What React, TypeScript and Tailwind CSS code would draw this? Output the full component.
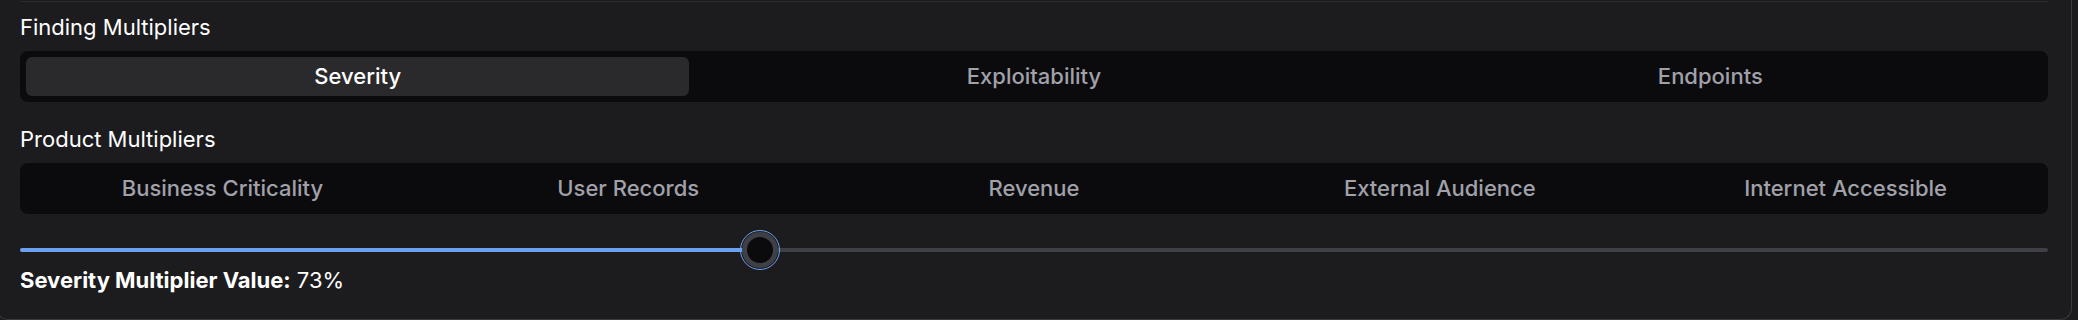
import React, { useState } from "react";

const FINDING = ["Severity", "Exploitability", "Endpoints"];
const PRODUCT = [
  "Business Criticality",
  "User Records",
  "Revenue",
  "External Audience",
  "Internet Accessible",
];

// slider runs 0..200 %, so 73 sits a bit over a third of the way
const MAX = 200;

export default function App() {
  const [active, setActive] = useState(0);
  const [value] = useState(73);
  const pct = (value / MAX) * 100;

  return (
    <div className="min-h-[320px] bg-[#1c1c1f] font-['Inter','Noto_Sans',sans-serif] text-white overflow-hidden">
      <div className="-ml-1 w-[2076px] h-[320px] border border-t-0 border-[#3a3a40] rounded-b-xl pl-[23px] pr-[23px] pt-px">
        <div className="h-px bg-[#2b2b2f]" />

        <div className="mt-[9px] text-[22px] leading-[32px]">Finding Multipliers</div>
        <div className="mt-2 grid grid-cols-3 gap-[13px] rounded-lg bg-[#0b0b0d] p-[6px]">
          {FINDING.map((t, i) => (
            <button
              key={t}
              onClick={() => setActive(i)}
              className={`h-[39px] rounded-md text-[22px] font-medium ${
                i === active ? "bg-[#2a2a2d] text-white" : "text-[#a1a1aa]"
              }`}
            >
              {t}
            </button>
          ))}
        </div>

        <div className="mt-[21px] text-[22px] leading-[32px]">Product Multipliers</div>
        <div className="mt-2 grid grid-cols-5 gap-[13px] rounded-lg bg-[#0b0b0d] p-[6px]">
          {PRODUCT.map((t) => (
            <button key={t} className="h-[39px] rounded-md text-[22px] font-medium text-[#a1a1aa]">
              {t}
            </button>
          ))}
        </div>

        <div className="relative mt-[26px] h-5 flex items-center">
          <div className="relative h-1 w-full rounded-full bg-[#3f3f46]">
            <div className="absolute left-0 top-0 h-full rounded-full bg-[#6aa1f0]" style={{ width: `${pct}%` }} />
          </div>
          <div
            className="absolute top-1/2 -translate-x-1/2 -translate-y-1/2 h-10 w-10 rounded-full border-[1.5px] border-[#6aa1f0] p-px"
            style={{ left: `${pct}%` }}
          >
            <div className="h-full w-full rounded-full border-[5px] border-[#3f3f46] bg-[#0b0b0d]" />
          </div>
        </div>

        <div className="mt-1 text-[22px] leading-[32px]">
          <span className="font-bold">Severity Multiplier Value:</span> {value}%
        </div>
      </div>
    </div>
  );
}
